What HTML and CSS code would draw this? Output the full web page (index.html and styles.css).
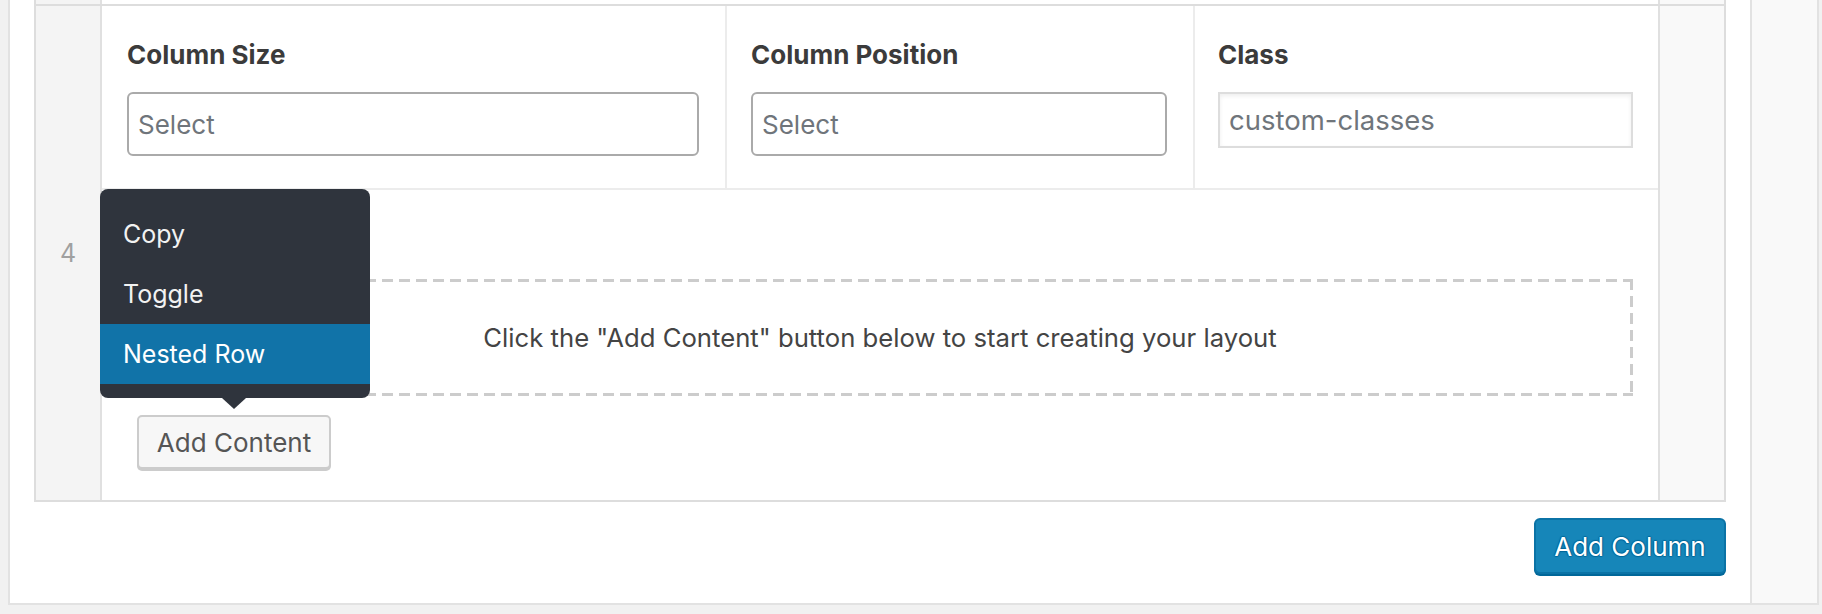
FILE: index.html
```html
<!DOCTYPE html>
<html lang="en">
<head>
<meta charset="utf-8">
<title>Columns</title>
<link rel="stylesheet" href="styles.css">
</head>
<body>
<div class="panel">
  <div class="main">
    <div class="table">
      <div class="row prev-row">
        <div class="row-num"></div>
        <div class="row-body"></div>
        <div class="row-actions"></div>
      </div>
      <div class="row cur-row">
        <div class="row-num">4</div>
        <div class="row-body">
          <div class="fields">
            <div class="field field-size">
              <div class="label">Column Size</div>
              <div class="select">Select</div>
            </div>
            <div class="field field-pos">
              <div class="label">Column Position</div>
              <div class="select">Select</div>
            </div>
            <div class="field field-class">
              <div class="label">Class</div>
              <div class="text-input">custom-classes</div>
            </div>
          </div>
          <div class="content-area">
            <div class="dropzone">Click the "Add Content" button below to start creating your layout</div>
            <div class="btn-wrap">
              <button class="btn">Add Content</button>
              <div class="menu">
                <div class="menu-item">Copy</div>
                <div class="menu-item">Toggle</div>
                <div class="menu-item active">Nested Row</div>
                <span class="menu-arrow"></span>
              </div>
            </div>
          </div>
        </div>
        <div class="row-actions"></div>
      </div>
    </div>
    <div class="footer">
      <button class="btn-primary">Add Column</button>
    </div>
  </div>
  <div class="side"></div>
</div>
</body>
</html>
```
FILE: styles.css
```css
* { box-sizing: border-box; }
html, body { margin: 0; padding: 0; }
body {
  background: #f1f1f1;
  font-family: "Inter", "Roboto", sans-serif;
  width: 1822px;
  height: 614px;
  overflow: hidden;
}
.panel {
  margin-left: 8px;
  width: 1811px;
  height: 605px;
  display: flex;
  background: #fff;
  border-left: 2px solid #e2e2e2;
  border-right: 2px solid #e2e2e2;
  border-bottom: 2px solid #e2e2e2;
}
.main {
  width: 1742px;
  flex: none;
  padding: 0 24px;
  display: flex;
  flex-direction: column;
  border-right: 2px solid #e2e2e2;
}
.side {
  flex: 1;
  background: #f9f9f9;
}
.table {
  border-left: 2px solid #dddddd;
  border-right: 2px solid #dddddd;
  border-bottom: 2px solid #dddddd;
}
.row {
  display: flex;
}
.prev-row {
  height: 6px;
  border-bottom: 2px solid #dddddd;
}
.cur-row {
  height: 494px;
}
.row-num {
  width: 66px;
  flex: none;
  background: #f4f4f4;
  border-right: 2px solid #e0e0e0;
  display: flex;
  align-items: center;
  justify-content: center;
  color: #a0a0a0;
  font-size: 25px;
}
.row-body {
  width: 1556px;
  flex: none;
  background: #fff;
}
.row-actions {
  width: 66px;
  flex: none;
  background: #f9f9f9;
  border-left: 2px solid #e0e0e0;
}
.fields {
  display: grid;
  grid-template-columns: 625px 468px 463px;
  height: 184px;
  border-bottom: 2px solid #ececec;
}
.field {
  padding: 34px 26px 0 24px;
}
.field-size { border-right: 2px solid #ececec; padding-left: 25px; }
.field-pos { border-right: 2px solid #ececec; padding-left: 24px; }
.field-class { padding-left: 23px; padding-right: 25px; }
.label {
  font-size: 26px;
  line-height: 30px;
  font-weight: 700;
  color: #3b3b3b;
  margin-bottom: 22px;
}
.select {
  height: 64px;
  border: 2px solid #aaaaaa;
  border-radius: 6px;
  padding-left: 9px;
  display: flex;
  align-items: center;
  font-size: 26px;
  color: #6f757b;
  background: #fff;
}
.text-input {
  height: 56px;
  border: 2px solid #dddddd;
  box-shadow: inset 0 2px 4px rgba(0, 0, 0, 0.07);
  padding-left: 9px;
  display: flex;
  align-items: center;
  font-size: 27.5px;
  color: #6f757b;
  background: #fff;
}
.content-area {
  padding: 89px 25px 0 25px;
}
.dropzone {
  height: 117px;
  display: flex;
  align-items: center;
  justify-content: center;
  font-size: 25.7px;
  color: #444;
  background-image:
    repeating-linear-gradient(90deg, #cccccc 0 11px, transparent 11px 17px),
    repeating-linear-gradient(90deg, #cccccc 0 11px, transparent 11px 17px),
    repeating-linear-gradient(180deg, #cccccc 0 11px, transparent 11px 17px),
    repeating-linear-gradient(180deg, #cccccc 0 11px, transparent 11px 17px);
  background-size: 100% 3px, 100% 3px, 3px 100%, 3px 100%;
  background-position: left top, left bottom, left top, right top;
  background-repeat: no-repeat;
}
.btn-wrap {
  position: relative;
  margin-top: 19px;
  margin-left: 10px;
  width: 194px;
}
.btn {
  display: block;
  width: 194px;
  height: 54px;
  border: 2px solid #cccccc;
  border-radius: 5px;
  background: #f7f7f7;
  box-shadow: 0 2px 0 #cccccc;
  font-family: "Inter", "Roboto", sans-serif;
  font-size: 26px;
  color: #555;
  padding: 0;
}
.menu {
  position: absolute;
  left: 50%;
  margin-left: -134px;
  bottom: calc(100% + 17px);
  width: 270px;
  padding: 15px 0 14px;
  background: #2f343d;
  border-radius: 8px;
}
.menu-item {
  height: 60px;
  display: flex;
  align-items: center;
  padding-left: 23px;
  font-size: 25px;
  color: #f2f2f2;
}
.menu-item.active {
  background: #1173a8;
  color: #fff;
}
.menu-arrow {
  position: absolute;
  left: 50%;
  margin-left: -13px;
  top: 100%;
  width: 0;
  height: 0;
  border-top: 11px solid #2f343d;
  border-left: 12px solid transparent;
  border-right: 12px solid transparent;
}
.footer {
  display: flex;
  justify-content: flex-end;
  padding-top: 16px;
}
.btn-primary {
  width: 192px;
  height: 56px;
  background: #1686b9;
  border: 2px solid #0b73a6;
  border-radius: 6px;
  box-shadow: 0 2px 0 #006799;
  color: #fff;
  font-family: "Inter", "Roboto", sans-serif;
  font-size: 26px;
  padding: 0;
  text-shadow: 0 -1px 1px #006799, 1px 0 1px #006799, 0 1px 1px #006799, -1px 0 1px #006799;
}
```
